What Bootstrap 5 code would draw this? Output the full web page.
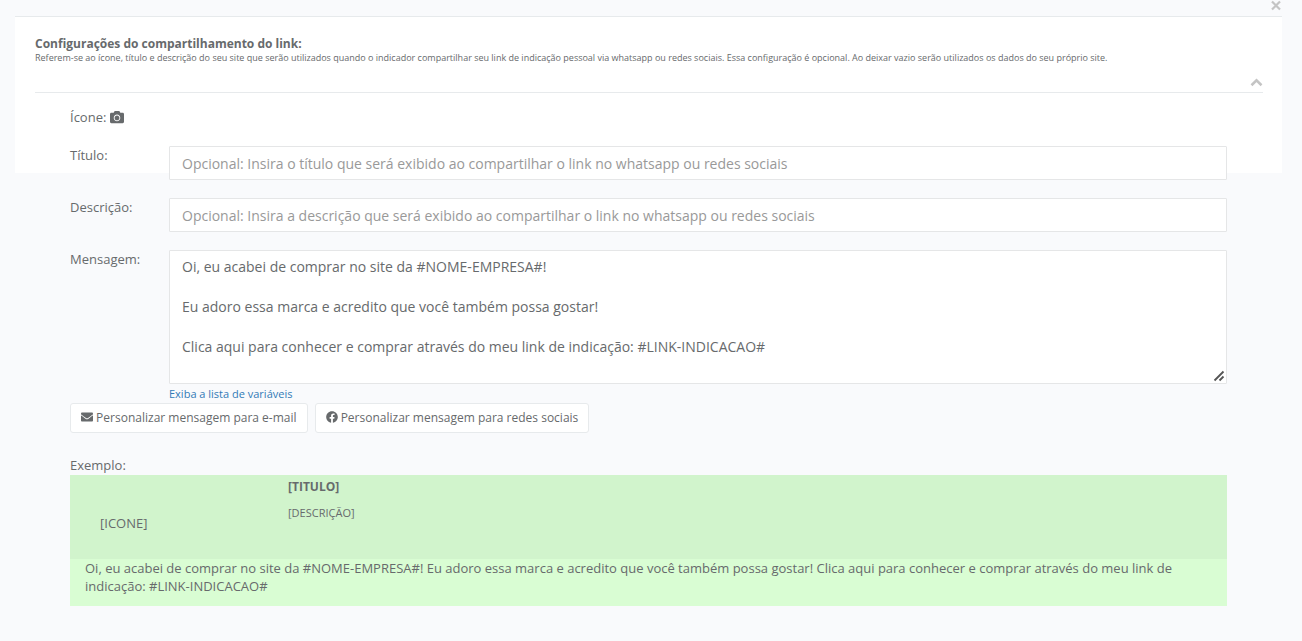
<!DOCTYPE html>
<html lang="pt-BR">
<head>
<meta charset="utf-8">
<meta name="viewport" content="width=device-width, initial-scale=1">
<title>Configurações do compartilhamento do link</title>
<link href="https://cdn.jsdelivr.net/npm/bootstrap@5.3.0/dist/css/bootstrap.min.css" rel="stylesheet">
<style>
  body { background: #f9fafc; color: #676a6c; font: 13px/18px "Open Sans", sans-serif; }
  .close-btn { width: 12px; height: 12px; margin-right: 20px; color: #c4c4c4; }
  .ibox { margin: 0 20px 0 15px; border-top: 1px solid #e7eaec;
          background: linear-gradient(#fff, #fff) no-repeat 0 0 / 100% 156px; }
  .ibox-head { margin: 0 19px 0 20px; padding-top: 18px; border-bottom: 1px solid #e7eaec; }
  .ibox-head h1 { font-size: 12px; line-height: 18px; }
  .hint { font-size: 9px; line-height: 10px; }
  .toggle-area { padding-top: 15px; }
  .toggle-btn { width: 13px; height: 14px; color: #c4c4c4; }
  .ibox-body { padding: 15px 55px 0; }
  .fa-ico { width: 12px; height: 12px; fill: currentColor; vertical-align: -1px; }
  .cam-btn { line-height: 18px; font-size: 13px; }
  .cam-ico { width: 14px; height: 14px; vertical-align: -2px; }
  .field { display: grid; grid-template-columns: 99px minmax(0, 1fr); margin-bottom: 18px; }
  .form-control { border: 1px solid #e5e6e7; border-radius: 1px; color: #676a6c;
                  font-size: 14px; line-height: 20px; padding: 6px 12px; }
  .form-control::placeholder { color: #999; }
  input.form-control { height: 34px; }
  textarea.form-control { height: 134px; resize: vertical; }
  textarea::-webkit-resizer { background: url("data:image/svg+xml,%3Csvg xmlns='http://www.w3.org/2000/svg' width='15' height='15'%3E%3Cpath d='M3.5 12.5l9-9M8.5 12.5l4-4' stroke='%23555' stroke-width='1.8'/%3E%3C/svg%3E") no-repeat right bottom; }
  .vars-link { font-size: 11px; line-height: 19px; color: #337ab7; text-decoration: none; }
  .actions { gap: 7px; margin-bottom: 23px; }
  .btn-white { background: #fff; border: 1px solid #e7eaec; border-radius: 3px; color: #676a6c;
               font-size: 12px; line-height: 18px; padding: 5px 10px; }
  .preview { background: #d9fdd3; margin-top: 1px; }
  .preview-top { background: #d1f4cc; min-height: 84px; }
  .preview-icon { width: 218px; padding: 39px 30px 0; }
  .preview-title { font-size: 12px; padding-top: 3px; }
  .preview-desc { font-size: 11px; margin-top: 8px; }
  .preview-msg { padding: 0 15px 11px; }
</style>
</head>
<body>
<div class="d-flex justify-content-end pb-1">
  <button type="button" class="close-btn btn p-0 border-0 d-flex" aria-label="Fechar">
    <svg width="12" height="12" viewBox="0 0 12 12" stroke="currentColor" stroke-width="2.2" aria-hidden="true"><path d="M2 1.5l8 8M10 1.5l-8 8"/></svg>
  </button>
</div>
<main class="ibox">
  <header class="ibox-head">
    <h1 class="fw-bold m-0">Configurações do compartilhamento do link:</h1>
    <p class="hint m-0">Referem-se ao ícone, título e descrição do seu site que serão utilizados quando o indicador compartilhar seu link de indicação pessoal via whatsapp ou redes sociais. Essa configuração é opcional. Ao deixar vazio serão utilizados os dados do seu próprio site.</p>
    <div class="toggle-area d-flex justify-content-end">
      <button type="button" class="toggle-btn btn p-0 border-0 d-flex" aria-label="Recolher">
        <svg width="13" height="10" viewBox="0 0 13 10" fill="none" stroke="currentColor" stroke-width="2.6" aria-hidden="true"><path d="M1.5 7.2L6.5 2.4l5 4.8"/></svg>
      </button>
    </div>
  </header>
  <form class="ibox-body">
    <div class="mb-3 pb-1">Ícone:
      <button type="button" class="cam-btn btn p-0 border-0 align-baseline text-reset" aria-label="Escolher ícone"><svg class="fa-ico cam-ico" viewBox="0 0 512 512" aria-hidden="true"><path d="M512 144v288c0 26.5-21.5 48-48 48H48c-26.5 0-48-21.5-48-48V144c0-26.5 21.5-48 48-48h88l12.3-32.9c7-18.7 24.9-31.1 44.9-31.1h125.5c20 0 37.9 12.4 44.9 31.1L376 96h88c26.5 0 48 21.5 48 48zM376 288c0-66.2-53.8-120-120-120s-120 53.8-120 120 53.8 120 120 120 120-53.8 120-120zm-32 0c0 48.5-39.5 88-88 88s-88-39.5-88-88 39.5-88 88-88 88 39.5 88 88z"/></svg></button>
    </div>
    <div class="field">
      <label for="titulo">Título:</label>
      <input id="titulo" type="text" class="form-control" placeholder="Opcional: Insira o título que será exibido ao compartilhar o link no whatsapp ou redes sociais">
    </div>
    <div class="field">
      <label for="descricao">Descrição:</label>
      <input id="descricao" type="text" class="form-control" placeholder="Opcional: Insira a descrição que será exibido ao compartilhar o link no whatsapp ou redes sociais">
    </div>
    <div class="field mb-0">
      <label for="mensagem">Mensagem:</label>
      <div>
        <textarea id="mensagem" class="form-control d-block">Oi, eu acabei de comprar no site da #NOME-EMPRESA#!

Eu adoro essa marca e acredito que você também possa gostar!

Clica aqui para conhecer e comprar através do meu link de indicação: #LINK-INDICACAO#</textarea>
        <a href="#" class="vars-link d-block">Exiba a lista de variáveis</a>
      </div>
    </div>
    <div class="actions d-flex flex-wrap">
      <button type="button" class="btn btn-white"><svg class="fa-ico" viewBox="0 0 512 512" aria-hidden="true"><path d="M502.3 190.8c3.9-3.1 9.7-.2 9.7 4.7V400c0 26.5-21.5 48-48 48H48c-26.5 0-48-21.5-48-48V195.6c0-5 5.7-7.8 9.7-4.7 22.4 17.4 52.1 39.5 154.1 113.6 21.1 15.4 56.7 47.8 92.2 47.6 35.7.3 72-32.8 92.3-47.6 102-74.1 131.6-96.3 154-113.7zM256 320c23.2.4 56.6-29.2 73.4-41.4 132.7-96.3 142.8-104.7 173.4-128.7 5.8-4.5 9.2-11.5 9.2-18.9v-19c0-26.5-21.5-48-48-48H48c-26.5 0-48 21.5-48 48v19c0 7.4 3.4 14.3 9.2 18.9 30.6 23.9 40.7 32.4 173.4 128.7 16.8 12.2 50.2 41.8 73.4 41.4z"/></svg> Personalizar mensagem para e-mail</button>
      <button type="button" class="btn btn-white"><svg class="fa-ico" viewBox="0 0 512 512" aria-hidden="true"><path d="M504 256C504 119 393 8 256 8S8 119 8 256c0 123.78 90.69 226.38 209.25 245V327.69h-63V256h63v-54.64c0-62.15 37-96.48 93.67-96.48 27.14 0 55.52 4.84 55.52 4.84v61h-31.28c-30.8 0-40.41 19.12-40.41 38.73V256h68.78l-11 71.69h-57.78V501C413.31 482.38 504 379.78 504 256z"/></svg> Personalizar mensagem para redes sociais</button>
    </div>
    <div>Exemplo:</div>
    <section class="preview" aria-label="Exemplo">
      <div class="preview-top d-flex">
        <div class="preview-icon flex-shrink-0">[ICONE]</div>
        <div>
          <div class="preview-title fw-bold">[TITULO]</div>
          <div class="preview-desc">[DESCRIÇÃO]</div>
        </div>
      </div>
      <p class="preview-msg m-0">Oi, eu acabei de comprar no site da #NOME-EMPRESA#! Eu adoro essa marca e acredito que você também possa gostar! Clica aqui para conhecer e comprar através do meu link de indicação: #LINK-INDICACAO#</p>
    </section>
  </form>
</main>
<script src="https://cdn.jsdelivr.net/npm/bootstrap@5.3.0/dist/js/bootstrap.bundle.min.js"></script>
</body>
</html>
